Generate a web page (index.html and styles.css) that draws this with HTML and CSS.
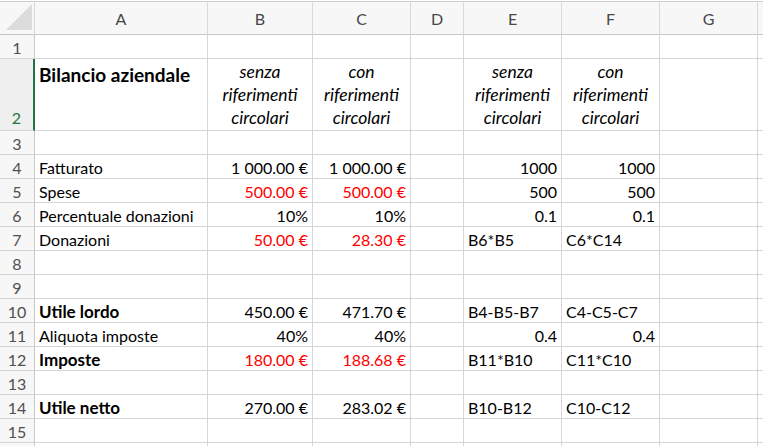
FILE: index.html
```html
<!DOCTYPE html>
<html lang="it">
<head>
<meta charset="utf-8">
<title>Bilancio aziendale</title>
<link rel="stylesheet" href="styles.css">
</head>
<body>
<div class="sheet">
  <div class="ch corner"><span class="tri"></span></div>
  <div class="ch">A</div><div class="ch">B</div><div class="ch">C</div><div class="ch">D</div><div class="ch">E</div><div class="ch">F</div><div class="ch">G</div><div class="ch"></div>

  <div class="rh">1</div><div class="c"></div><div class="c"></div><div class="c"></div><div class="c"></div><div class="c"></div><div class="c"></div><div class="c"></div><div class="c"></div>

  <div class="rh tall sel">2</div>
  <div class="c tall title">Bilancio aziendale</div>
  <div class="c tall hd">senza<br>riferimenti<br>circolari</div>
  <div class="c tall hd">con<br>riferimenti<br>circolari</div>
  <div class="c tall"></div>
  <div class="c tall hd">senza<br>riferimenti<br>circolari</div>
  <div class="c tall hd">con<br>riferimenti<br>circolari</div>
  <div class="c tall"></div><div class="c tall"></div>

  <div class="rh">3</div><div class="c"></div><div class="c"></div><div class="c"></div><div class="c"></div><div class="c"></div><div class="c"></div><div class="c"></div><div class="c"></div>

  <div class="rh">4</div><div class="c">Fatturato</div><div class="c r">1 000.00 €</div><div class="c r">1 000.00 €</div><div class="c"></div><div class="c r">1000</div><div class="c r">1000</div><div class="c"></div><div class="c"></div>

  <div class="rh">5</div><div class="c">Spese</div><div class="c r red">500.00 €</div><div class="c r red">500.00 €</div><div class="c"></div><div class="c r">500</div><div class="c r">500</div><div class="c"></div><div class="c"></div>

  <div class="rh">6</div><div class="c">Percentuale donazioni</div><div class="c r">10%</div><div class="c r">10%</div><div class="c"></div><div class="c r">0.1</div><div class="c r">0.1</div><div class="c"></div><div class="c"></div>

  <div class="rh">7</div><div class="c">Donazioni</div><div class="c r red">50.00 €</div><div class="c r red">28.30 €</div><div class="c"></div><div class="c">B6*B5</div><div class="c">C6*C14</div><div class="c"></div><div class="c"></div>

  <div class="rh">8</div><div class="c"></div><div class="c"></div><div class="c"></div><div class="c"></div><div class="c"></div><div class="c"></div><div class="c"></div><div class="c"></div>

  <div class="rh">9</div><div class="c"></div><div class="c"></div><div class="c"></div><div class="c"></div><div class="c"></div><div class="c"></div><div class="c"></div><div class="c"></div>

  <div class="rh">10</div><div class="c b">Utile lordo</div><div class="c r">450.00 €</div><div class="c r">471.70 €</div><div class="c"></div><div class="c">B4-B5-B7</div><div class="c">C4-C5-C7</div><div class="c"></div><div class="c"></div>

  <div class="rh">11</div><div class="c">Aliquota imposte</div><div class="c r">40%</div><div class="c r">40%</div><div class="c"></div><div class="c r">0.4</div><div class="c r">0.4</div><div class="c"></div><div class="c"></div>

  <div class="rh">12</div><div class="c b">Imposte</div><div class="c r red">180.00 €</div><div class="c r red">188.68 €</div><div class="c"></div><div class="c">B11*B10</div><div class="c">C11*C10</div><div class="c"></div><div class="c"></div>

  <div class="rh">13</div><div class="c"></div><div class="c"></div><div class="c"></div><div class="c"></div><div class="c"></div><div class="c"></div><div class="c"></div><div class="c"></div>

  <div class="rh">14</div><div class="c b">Utile netto</div><div class="c r">270.00 €</div><div class="c r">283.02 €</div><div class="c"></div><div class="c">B10-B12</div><div class="c">C10-C12</div><div class="c"></div><div class="c"></div>

  <div class="rh">15</div><div class="c"></div><div class="c"></div><div class="c"></div><div class="c"></div><div class="c"></div><div class="c"></div><div class="c"></div><div class="c"></div>

  <div class="rh"></div><div class="c"></div><div class="c"></div><div class="c"></div><div class="c"></div><div class="c"></div><div class="c"></div><div class="c"></div><div class="c"></div>
</div>
</body>
</html>
```
FILE: styles.css
```css
html, body {
  margin: 0;
  padding: 0;
  background: #ffffff;
  overflow: hidden;
}
body {
  padding-top: 1px;
  font-family: Lato, "Open Sans", sans-serif;
  font-size: 16px;
  color: #000;
}
.sheet {
  display: grid;
  grid-template-columns: 35px 173px 105px 98px 53px 98px 98px 98px 40px;
  grid-auto-rows: 24px;
  grid-template-rows: 33px 24px 72px;
  border-top: 1px solid #cfcfcf;
  width: 800px;
}
.ch, .rh, .c {
  box-sizing: border-box;
  border-right: 1px solid #d6d6d6;
  border-bottom: 1px solid #d6d6d6;
  overflow: hidden;
  white-space: nowrap;
}
.ch {
  background: #f7f7f7;
  color: #474747;
  font-size: 16px;
  display: flex;
  align-items: center;
  justify-content: center;
  border-bottom-color: #c8c8c8;
  border-right-color: #d9d9d9;
}
.corner {
  position: relative;
}
.tri {
  position: absolute;
  left: 6px;
  bottom: 4px;
  width: 0;
  height: 0;
  border-left: 26px solid transparent;
  border-bottom: 26px solid #dcdcdc;
}
.rh {
  background: #f7f7f7;
  color: #4f4f4f;
  font-size: 16px;
  display: flex;
  align-items: flex-end;
  justify-content: center;
  padding-bottom: 1px;
  line-height: 18px;
  border-right-color: #c8c8c8;
}
.rh.sel {
  color: #217346;
  background: #efefef;
  border-right: 2px solid #217346;
  padding-bottom: 3px;
}
.c {
  display: flex;
  align-items: flex-end;
  padding: 0 4px 1px 4px;
  line-height: 18px;
}
.c.r {
  justify-content: flex-end;
  padding-right: 4px;
}
.c.red {
  color: #ff0000;
}
.c.b {
  font-weight: bold;
  font-size: 17px;
}
.c.title {
  align-items: flex-start;
  font-weight: bold;
  font-size: 19px;
  padding-top: 4px;
  line-height: 23px;
}
.c.hd {
  font-style: italic;
  font-size: 17.5px;
  justify-content: center;
  text-align: center;
  line-height: 23px;
  padding-bottom: 1px;
}
```
